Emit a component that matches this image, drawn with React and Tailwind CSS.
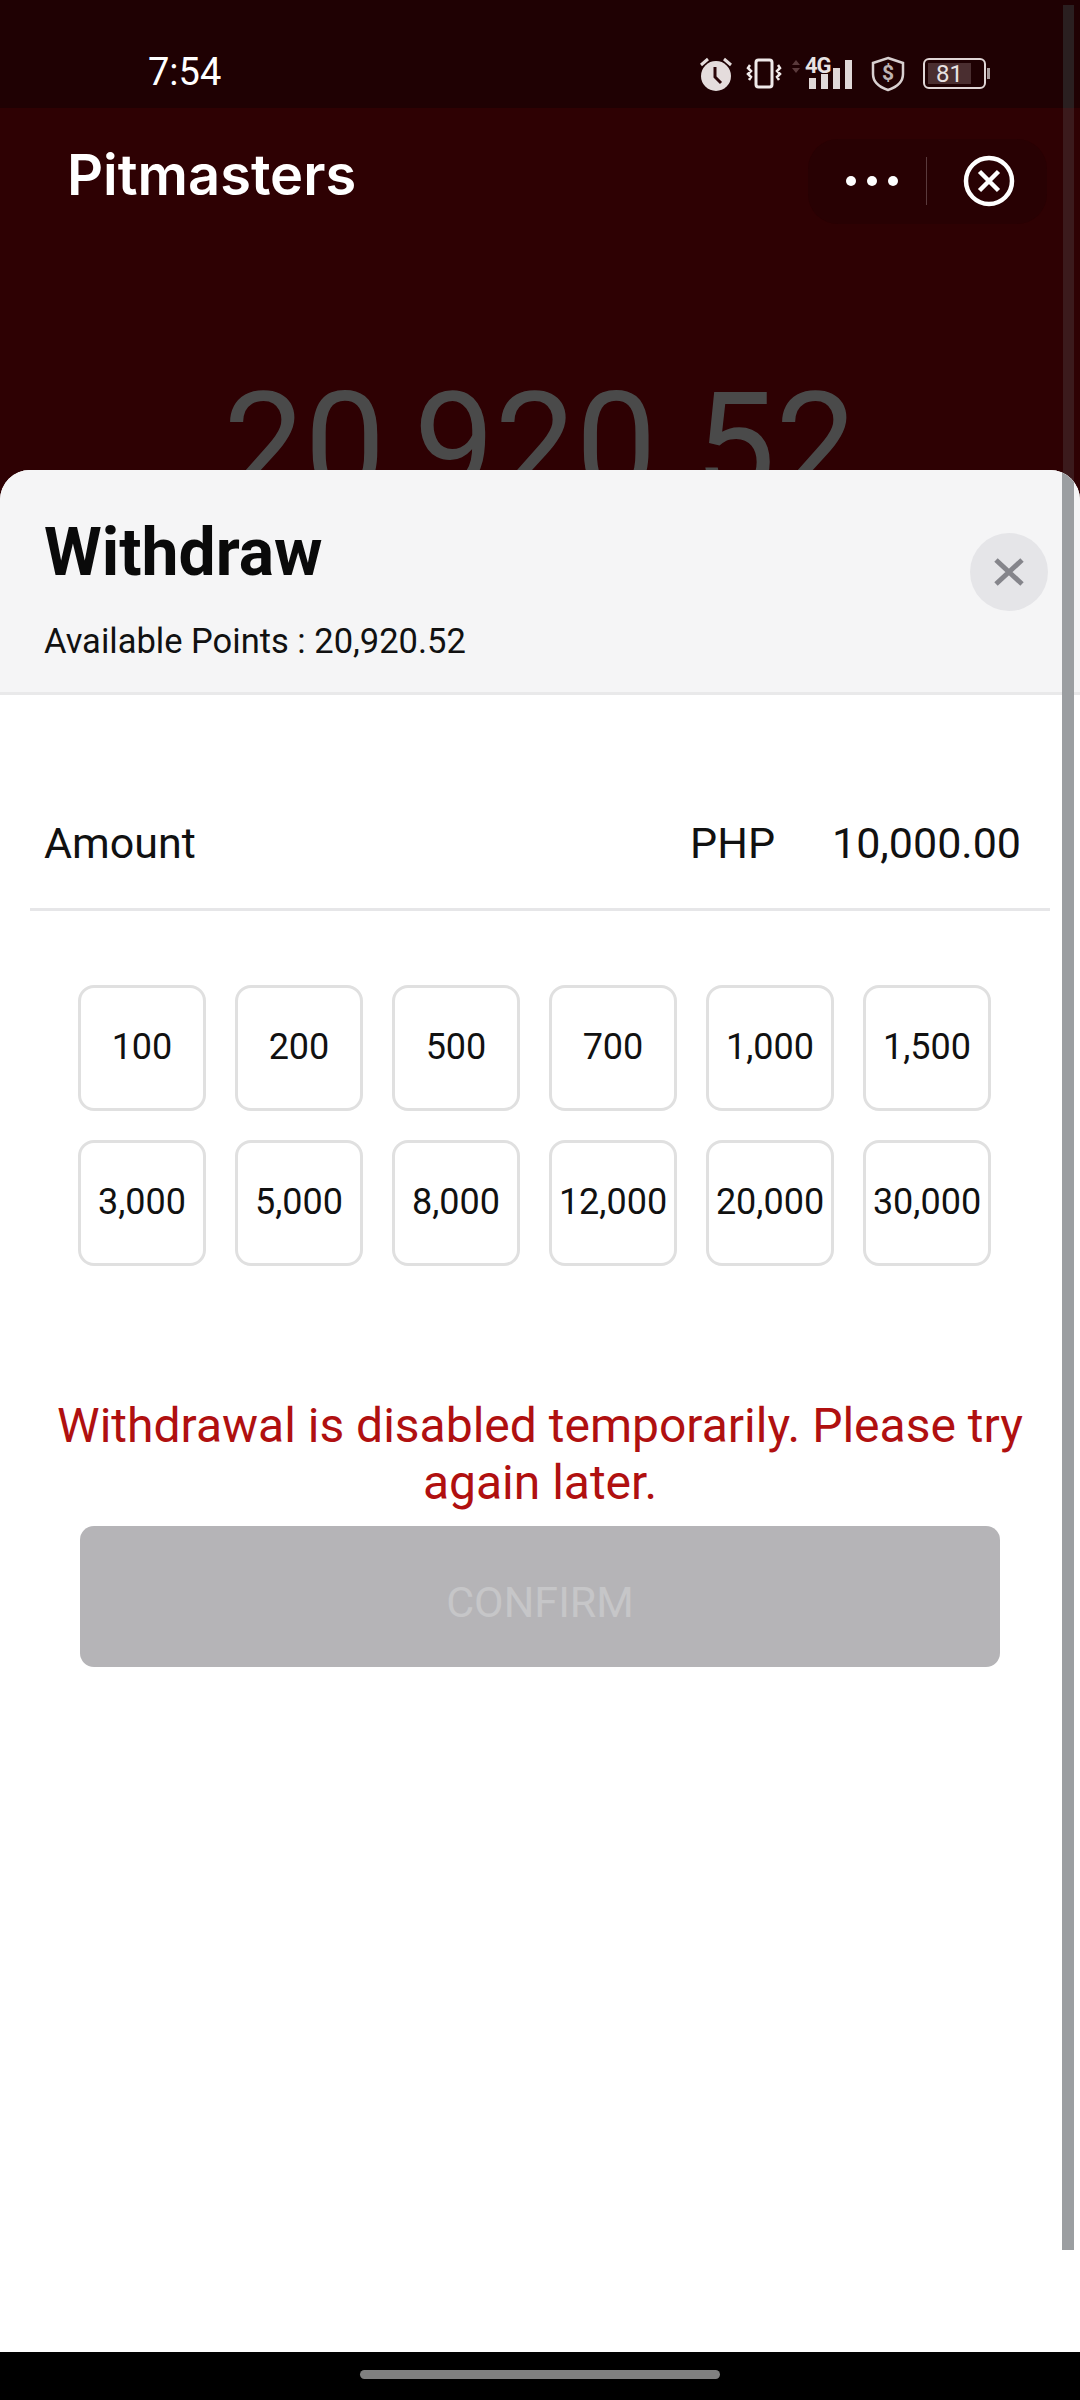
const amounts = ['100', '200', '500', '700', '1,000', '1,500', '3,000', '5,000', '8,000', '12,000', '20,000', '30,000'];

const AlarmIcon = () => (
  <svg width="34" height="36" viewBox="0 0 34 36">
    <circle cx="17" cy="20" r="15" fill="#e4dcdc" />
    <path d="M16 11v10l6 6" fill="none" stroke="#2a0508" strokeWidth="3" />
    <path d="M2 9l7-6M32 9l-7-6" fill="none" stroke="#e4dcdc" strokeWidth="3" />
  </svg>
);

const VibrateIcon = () => (
  <svg width="36" height="32" viewBox="0 0 36 32">
    <rect x="10" y="2" width="16" height="27" rx="2.5" fill="none" stroke="#efe9e9" strokeWidth="3" />
    <path d="M4 7l-2 3 3 3-3 3 3 3-2 3M32 7l2 3-3 3 3 3-3 3 2 3" fill="none" stroke="#efe9e9" strokeWidth="2.5" />
  </svg>
);

const SignalIcon = () => (
  <div className="relative w-[62px] h-[32px]">
    <svg className="absolute left-0 top-0" width="62" height="32" viewBox="0 0 62 32">
      <path d="M1 7l4-5 4 5zM1 10l4 5 4-5z" fill="#5a3a3c" />
      <rect x="18" y="20" width="7" height="11" fill="#e0d8d8" />
      <rect x="30" y="16" width="7" height="15" fill="#e0d8d8" />
      <rect x="42" y="10" width="7" height="21" fill="#e0d8d8" />
      <rect x="54" y="2" width="7" height="29" fill="#e0d8d8" />
    </svg>
    <span className="absolute left-[14px] top-[-4px] text-[22px] font-bold leading-[24px] tracking-[-1px] text-[#e8e2e2]">4G</span>
  </div>
);

const ShieldIcon = () => (
  <div className="relative w-[34px] h-[36px] flex items-center justify-center">
    <svg className="absolute inset-0" width="34" height="36" viewBox="0 0 34 36">
      <path d="M17 2l15 5v11c0 8-6 13-15 16C8 31 2 26 2 18V7z" fill="none" stroke="#d8d0d0" strokeWidth="2.5" />
    </svg>
    <span className="relative text-[21px] font-bold leading-none text-[#bdb3b3]">$</span>
  </div>
);

const BatteryIcon = () => (
  <div className="flex items-center">
    <div className="w-[63px] h-[31px] rounded-[6px] border-2 border-[#e0d6d6] p-[3px]">
      <div className="w-[43px] h-full bg-[#4a2e30] flex items-center justify-center text-[24px] leading-none text-[#e8e2e2]">81</div>
    </div>
    <div className="w-[3px] h-[11px] bg-[#a89c9c] ml-[1px]" />
  </div>
);

export default function App() {
  return (
    <div className="relative w-[1080px] h-[2400px] overflow-hidden flex flex-col bg-white font-['Roboto',sans-serif]">
      {/* DARK PAGE BEHIND THE SHEET */}
      <div className="relative h-[500px] shrink-0 bg-[#2e0103] -mb-[30px] overflow-hidden">
        <div className="h-[108px] bg-[#1f0103] flex items-center pt-[36px] pl-[148px] pr-[90px] justify-between">
          <span className="text-[38px] leading-none text-white">7:54</span>
          <div className="flex items-center mt-[3px]">
            <AlarmIcon />
            <div className="w-[13px]" />
            <VibrateIcon />
            <div className="w-[9px]" />
            <SignalIcon />
            <div className="w-[18px]" />
            <ShieldIcon />
            <div className="w-[18px]" />
            <BatteryIcon />
          </div>
        </div>

        <div className="h-[138px] flex items-center justify-between pl-[67px] pr-[33px] pt-[8px]">
          <span className="font-['Inter',sans-serif] text-[56px] font-semibold leading-none text-white -mt-[12px]">Pitmasters</span>
          <div className="w-[239px] h-[85px] rounded-[30px] bg-[#280103] flex items-center">
            <div className="w-[118px] flex justify-end gap-[11px] pr-[28px]">
              <span className="w-[10px] h-[10px] rounded-full bg-white" />
              <span className="w-[10px] h-[10px] rounded-full bg-white" />
              <span className="w-[10px] h-[10px] rounded-full bg-white" />
            </div>
            <div className="w-px h-[48px] bg-[#5a3a3c]" />
            <div className="flex-1 flex justify-center pl-[3px]">
              <svg width="52" height="52" viewBox="0 0 52 52">
                <circle cx="26" cy="26" r="23" fill="none" stroke="#fff" strokeWidth="4.5" />
                <path d="M16.5 16.5l19 19M35.5 16.5l-19 19" fill="none" stroke="#fff" strokeWidth="4.5" />
              </svg>
            </div>
          </div>
        </div>

        <div className="mt-[128px] text-center text-[144px] leading-none text-[#4a4a4a]">20,920.52</div>

        <div className="absolute right-[6px] top-[5px] w-[11px] h-[103px] bg-[#2a1f20]" />
        <div className="absolute right-[6px] top-[108px] w-[11px] h-[392px] bg-[#3b1a1c]" />
      </div>

      {/* WITHDRAW SHEET */}
      <div className="relative flex-1 rounded-t-[30px] overflow-hidden bg-white">
        <div className="h-[225px] bg-[#f5f5f6] border-b-[3px] border-[#e9e9ea] pl-[44px] pt-[45px] relative">
          <h1 className="text-[66px] font-bold leading-[76px] text-[#0a0a0a]">Withdraw</h1>
          <p className="mt-[30px] text-[34.5px] leading-[40px] text-[#111]">Available Points : 20,920.52</p>
          <div className="absolute left-[970px] top-[63px] w-[78px] h-[78px] rounded-full bg-[#e5e5e8] flex items-center justify-center">
            <svg width="32" height="32" viewBox="0 0 32 32">
              <path d="M3 4l26 24M29 4L3 28" fill="none" stroke="#85858b" strokeWidth="5" />
            </svg>
          </div>
        </div>

        <div className="mx-[30px] h-[216px] border-b-[3px] border-[#e6e6e8] flex items-center justify-between pl-[14px] pr-[29px] pt-[98px] pb-[14px] text-[43px] leading-none text-[#111]">
          <span>Amount</span>
          <div className="flex gap-[57px]">
            <span>PHP</span>
            <span>10,000.00</span>
          </div>
        </div>

        <div className="ml-[78px] mt-[74px] grid grid-cols-[repeat(6,128px)] gap-[29px]">
          {amounts.map((a) => (
            <div key={a} className="h-[126px] rounded-[16px] border-[3px] border-[#e0e0e0] flex items-center justify-center pb-[2px] text-[36px] leading-none text-[#111]">
              {a}
            </div>
          ))}
        </div>

        <p className="mx-auto mt-[131px] w-[1000px] text-center text-[48px] leading-[57px] text-[#b01010]">
          Withdrawal is disabled temporarily. Please try again later.
        </p>

        <div className="ml-[80px] mt-[15px] w-[920px] h-[141px] rounded-[14px] bg-[#b5b4b7] flex items-center justify-center pt-[12px] text-[43px] leading-none text-[#c6c6c8]">
          CONFIRM
        </div>

        <div className="absolute right-[6px] top-0 w-[12px] h-[1780px] bg-[#9b9ea1]" />
      </div>

      {/* NAV BAR */}
      <div className="h-[48px] shrink-0 bg-black flex justify-center pt-[18px]">
        <div className="w-[360px] h-[9px] rounded-full bg-[#808080]" />
      </div>
    </div>
  );
}
